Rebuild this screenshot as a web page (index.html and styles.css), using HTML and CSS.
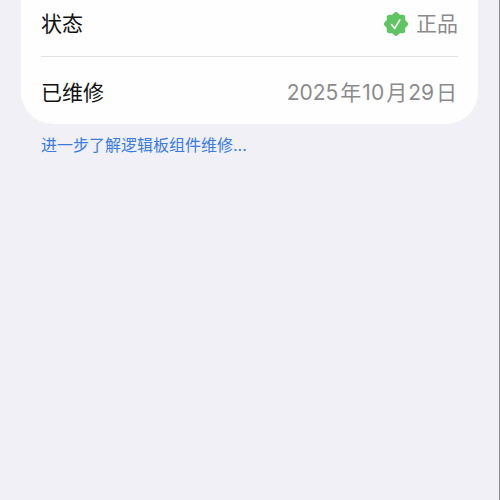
FILE: index.html
```
<!DOCTYPE html>
<html lang="zh-CN">
<head>
    <meta charset="UTF-8">
    <meta name="viewport" content="width=device-width, initial-scale=1.0">
    <title>部件与服务历史记录</title>
    <link rel="stylesheet" href="styles.css">
</head>
<body>
    <main class="page">
        <dl class="card">
            <div class="row">
                <dt class="label">状态</dt>
                <dd class="value">
                    <svg class="badge" viewBox="0 0 24 24" aria-hidden="true">
                        <g fill="#5fc563" stroke="#5fc563" stroke-width="5.4" stroke-linejoin="round">
                            <rect x="5.5" y="5.5" width="13" height="13"/>
                            <rect x="5.5" y="5.5" width="13" height="13" transform="rotate(45 12 12)"/>
                        </g>
                        <path d="M7.6 12.6l3.1 3.8 5-8.4" fill="none" stroke="#fff" stroke-width="1.6" stroke-linecap="round" stroke-linejoin="round"/>
                    </svg>
                    <span>正品</span>
                </dd>
            </div>
            <div class="row">
                <dt class="label">已维修</dt>
                <dd class="value"><time datetime="2025-10-29">2025<span class="unit">年</span>10<span class="unit">月</span>29<span class="unit">日</span></time></dd>
            </div>
        </dl>
        <a class="more" href="#">进一步了解逻辑板组件维修...</a>
    </main>
</body>
</html>
```

FILE: styles.css
```
body {
    margin: 0;
    background: #f0f0f6;
    font-family: Inter, "Noto Sans CJK SC", sans-serif;
    overflow-x: hidden;
}
.page {
    min-height: 100vh;
    box-sizing: border-box;
    padding: 0 21px;
    border-right: 1px solid #8c8c92;
    display: flow-root;
}
/* the top of the card is scrolled out of view */
.card {
    margin: -44px 0 0;
    padding: 32px 20px 0;
    background: #fefefe;
    border-radius: 32px;
}
.row {
    display: flex;
    align-items: center;
    justify-content: space-between;
    box-sizing: border-box;
    height: 68px;
    padding-top: 4px;
    font-size: 21px;
    line-height: 30px;
}
.row + .row {
    border-top: 1px solid #e2e2e4;
}
.label {
    color: #111;
}
.value {
    display: flex;
    align-items: center;
    gap: 8px;
    margin: 0;
    color: #8b8b8d;
}
.unit {
    margin: 0 1px 0 2px;
}
.badge {
    width: 24px;
    height: 24px;
}
.more {
    display: block;
    margin: 9px 20px 0;
    font-size: 16px;
    line-height: 24px;
    color: #3a7be0;
    text-decoration: none;
}
```
